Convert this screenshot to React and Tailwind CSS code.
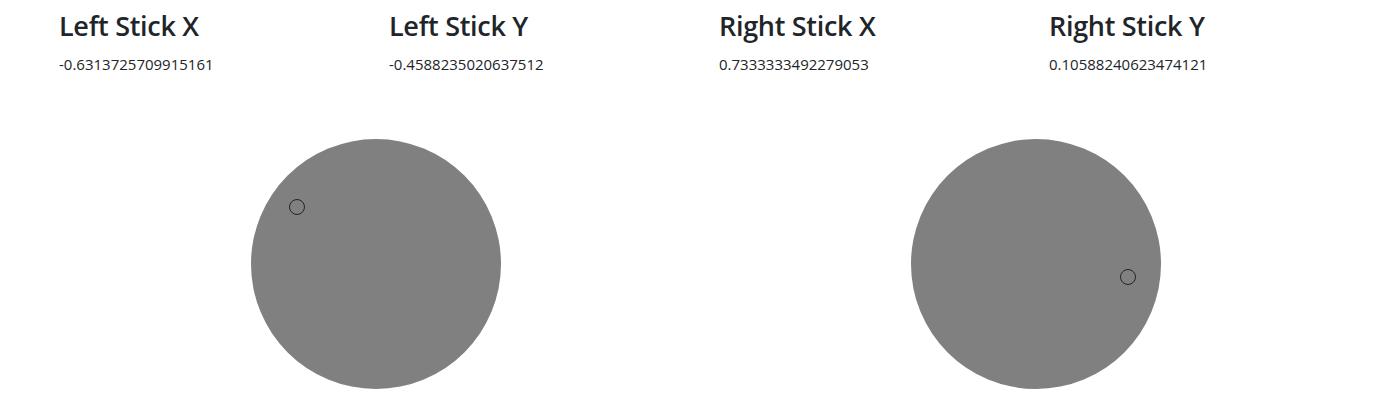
export default function App() {
  const sticks = [
    { label: "Left Stick X", value: "-0.6313725709915161" },
    { label: "Left Stick Y", value: "-0.4588235020637512" },
    { label: "Right Stick X", value: "0.7333333492279053" },
    { label: "Right Stick Y", value: "0.10588240623474121" },
  ];
  const pads = [
    { x: -0.6313725709915161, y: -0.4588235020637512 },
    { x: 0.7333333492279053, y: 0.10588240623474121 },
  ];
  return (
    <div className="bg-white w-[1395px] h-[420px] overflow-hidden pl-[46px] text-[#212529]" style={{ fontFamily: '"Open Sans", "Noto Sans", sans-serif' }}>
      <div className="grid grid-cols-[repeat(4,330px)]">
        {sticks.map((s) => (
          <div key={s.label} className="px-[13px] pt-[10px]">
            <h3 className="text-[27px] font-semibold leading-[1.2] tracking-[-0.3px]">{s.label}</h3>
            <p className="mt-[11px] text-[15px] leading-[1.5]">{s.value}</p>
          </div>
        ))}
      </div>
      <div className="grid grid-cols-[repeat(2,660px)] mt-[63px]">
        {pads.map((p, i) => (
          <div key={i} className="flex justify-center">
            <div className="relative w-[250px] h-[250px] rounded-full bg-[#808080]">
              <div
                className="absolute w-[16px] h-[16px] rounded-full border border-[#212529] -translate-x-1/2 -translate-y-1/2"
                style={{ left: `${125 + p.x * 125}px`, top: `${125 + p.y * 125}px` }}
              />
            </div>
          </div>
        ))}
      </div>
    </div>
  );
}
